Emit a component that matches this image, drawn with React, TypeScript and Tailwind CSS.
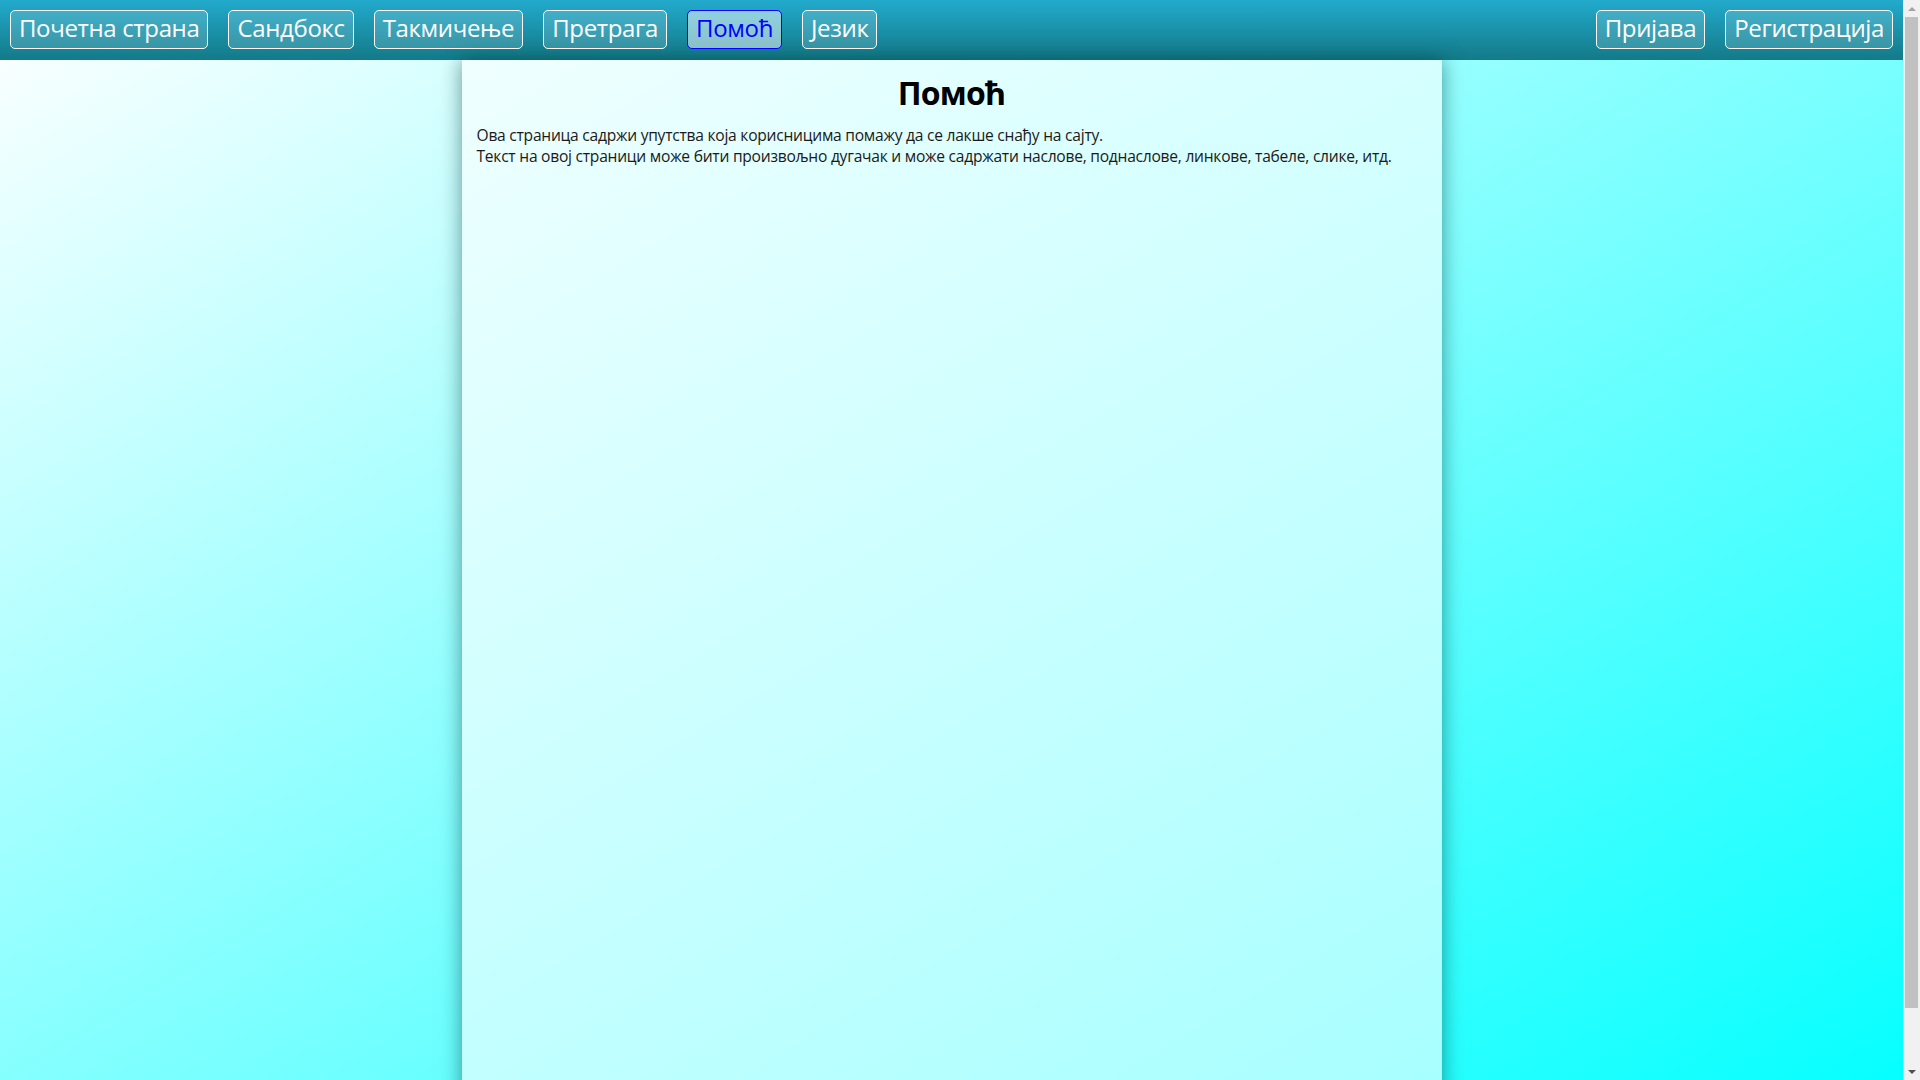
import React from 'react';

const leftLinks = ['Почетна страна', 'Сандбокс', 'Такмичење', 'Претрага', 'Помоћ', 'Језик'];
const rightLinks = ['Пријава', 'Регистрација'];

const NavButton: React.FC<{ label: string; active?: boolean }> = ({ label, active }) => (
  <a
    href="#"
    className={
      active
        ? 'flex items-center h-[39px] px-[8px] pb-[3px] rounded-[5px] border border-[#0000ff] bg-white/50 text-[#0000ff] text-[24px] leading-[32px] tracking-[-0.35px] no-underline'
        : 'flex items-center h-[39px] px-[8px] pb-[3px] rounded-[5px] border border-white bg-white/15 text-white text-[24px] leading-[32px] tracking-[-0.35px] no-underline'
    }
  >
    {label}
  </a>
);

// the window's classic scrollbar, as seen in the capture
const ScrollBar = () => (
  <div className="flex flex-col w-[17px] shrink-0 bg-[#f1f1f1]">
    <div className="flex items-center justify-center h-[17px]">
      <div className="w-0 h-0 border-x-[4px] border-x-transparent border-b-[4px] border-b-[#a3a3a3]" />
    </div>
    <div className="flex-1 px-[2px] pb-[55px]">
      <div className="h-full bg-[#c1c1c1]" />
    </div>
    <div className="flex items-center justify-center h-[17px]">
      <div className="w-0 h-0 border-x-[4px] border-x-transparent border-t-[4px] border-t-[#505050]" />
    </div>
  </div>
);

export default function App() {
  return (
    <div className="flex h-screen overflow-hidden font-['Open_Sans','Noto_Sans',sans-serif]">
      <div className="flex-1 overflow-hidden">
        <div className="min-h-[1140px] bg-[linear-gradient(to_bottom_right,#ffffff,#00ffff)]">
          {/* Top menu */}
          <nav className="flex items-start h-[60px] pt-[10px] px-[10px] bg-[linear-gradient(to_bottom,#22aacc,#137a88)]">
            <div className="flex gap-[20px]">
              {leftLinks.map((l) => (
                <NavButton key={l} label={l} active={l === 'Помоћ'} />
              ))}
            </div>
            <div className="flex gap-[20px] ml-auto">
              {rightLinks.map((l) => (
                <NavButton key={l} label={l} />
              ))}
            </div>
          </nav>

          {/* Page content */}
          <main className="w-[980px] mx-auto min-h-[1080px] bg-white/60 shadow-[0_0_20px_rgba(0,60,60,0.55)] px-[15px] pt-[11px]">
            <h1 className="m-0 text-center text-[32px] leading-[43px] font-bold tracking-[-0.8px] text-black">Помоћ</h1>
            <p className="mt-[11px] text-[15.6px] leading-[21px] tracking-[-0.25px] text-[#1a1a1a]">
              Ова страница садржи упутства која корисницима помажу да се лакше снађу на сајту.
              <br />
              Текст на овој страници може бити произвољно дугачак и може садржати наслове, поднаслове, линкове, табеле, слике, итд.
            </p>
          </main>
        </div>
      </div>
      <ScrollBar />
    </div>
  );
}
